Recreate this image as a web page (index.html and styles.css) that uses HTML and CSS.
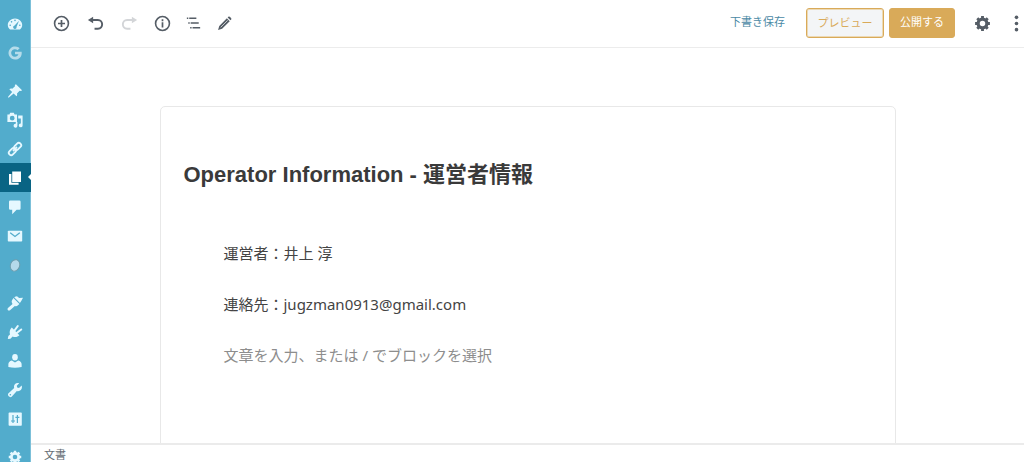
FILE: index.html
```html
<!DOCTYPE html>
<html lang="ja">
<head>
<meta charset="utf-8">
<meta name="viewport" content="width=device-width, initial-scale=1">
<title>Operator Information - 運営者情報</title>
<link rel="stylesheet" href="styles.css">
</head>
<body>
<div class="app">
  <nav class="side" aria-label="管理メニュー">
    <a class="item" href="#" aria-label="ダッシュボード"><svg viewBox="0 0 20 20"><path fill-rule="evenodd" d="M3.800 17h12.400c1.800-1.500 2.800-3.400 2.800-5.700C19 6.700 15 3 10 3s-9 3.700-9 8.300C1 13.600 2 15.500 3.800 17zM10 4.500a1 1 0 1 1 0 2 1 1 0 0 1 0-2zM5.700 6.300a1 1 0 1 1 0 2 1 1 0 0 1 0-2zM15 6l-3 7.500a2.200 2.200 0 1 1-2.500-1.700zM4 10.500a1 1 0 1 1 0 2 1 1 0 0 1 0-2zM16 10.500a1 1 0 1 1 0 2 1 1 0 0 1 0-2z"/></svg></a>
    <a class="item faded" href="#" aria-label="Google"><svg viewBox="0 0 20 20"><path d="M10 8.300h8.300c.8 6-2.800 9.900-8.300 9.900A8.200 8.200 0 1 1 15.800 4.100l-2.600 2.500A4.700 4.700 0 1 0 10 14.700c2.200 0 3.700-1.100 4.300-3H10z"/></svg></a>
    <span class="gap"></span>
    <a class="item" href="#" aria-label="投稿"><svg viewBox="0 0 20 20"><path d="M11.200 1.500l7.600 7.600-1.300 1-1.700-.3-3.300 3.300c.4 1.600.2 2.800-.6 3.600l-3.600-3.600-6.300 5.200-.8-.8 5.200-6.300L2.900 7.700c1-.8 2.300-.9 3.700-.5L10 4l-.2-1.500z"/></svg></a>
    <a class="item" href="#" aria-label="メディア"><svg viewBox="0 0 20 20"><path fill-rule="evenodd" d="M.500 3h2.500l1-2h4.500l1 2h3v9.500H.5zM6.500 4.700a3 3 0 1 0 0 6 3 3 0 0 0 0-6z"/><path d="M14 4.500h5.500v12.300a2.400 2.400 0 1 1-2.200-2.400V8H14zM11 12.500h2v4.700a2.400 2.400 0 1 1-2-2.400z"/></svg></a>
    <a class="item" href="#" aria-label="リンク"><svg viewBox="0 0 20 20"><g fill="none" stroke="currentColor" stroke-width="2.300"><rect x="-5" y="-3" width="10" height="6" rx="3" transform="translate(13.300 6.700) rotate(-45)"/><rect x="-5" y="-3" width="10" height="6" rx="3" transform="translate(6.700 13.300) rotate(-45)"/><path d="M7.500 12.500l5-5"/></g></svg></a>
    <a class="item active" href="#" aria-label="固定ページ" aria-current="page"><svg viewBox="0 0 20 20"><path d="M6.500 2h11v13h-11zM2.500 5h3v11h9v2.500h-12z"/></svg></a>
    <a class="item" href="#" aria-label="コメント"><svg viewBox="0 0 20 20"><path d="M4 2h11.500q1.500 0 1.500 1.500v8.500q0 1.500-1.500 1.500H12l-5.500 5.500v-5.500H4q-1.500 0-1.500-1.500V3.500Q2.500 2 4 2z"/></svg></a>
    <a class="item" href="#" aria-label="お問い合わせ"><svg viewBox="0 0 20 20"><rect x="1" y="3.500" width="18" height="13.500" rx="1"/><path d="M4 6l6 4.700L16 6" fill="none" stroke="#52accc" stroke-width="1.600"/></svg></a>
    <a class="item" href="#" aria-label="プラグイン設定"><svg viewBox="0 0 20 20"><ellipse cx="10" cy="10.500" rx="5.800" ry="7.300" transform="rotate(20 10 10.500)" fill="#b5d9ea" stroke="#6e9cab" stroke-width="1.200"/></svg></a>
    <span class="gap"></span>
    <a class="item" href="#" aria-label="外観"><svg viewBox="0 0 20 20"><path d="M8 3.800l7.500 7.500-2.500 2.200c-1 .8-2 .5-3.200.1l-6 5.400c-1.800 1.500-4.200-.7-2.600-2.600l5.700-5.200C5.800 9.500 5.500 8 6.300 6.500z"/><path d="M9 2.900L11.500 1.500l2 .8 1.500 1.500 5-.3-1.800 3.500-2 3z"/></svg></a>
    <a class="item" href="#" aria-label="プラグイン"><svg viewBox="0 0 20 20"><path d="M6 4.500l9.500 9.500c-2.200 2.300-5.500 2.800-8.500 1.500L4.300 18.500 1 18.700l.7-3.700 2-2C2.800 10 3.500 6.800 6 4.500z"/><path d="M9.500 8l4-5.500M12.500 11l5.300-4.200" stroke="currentColor" stroke-width="2.500" stroke-linecap="round"/></svg></a>
    <a class="item" href="#" aria-label="ユーザー"><svg viewBox="0 0 20 20"><ellipse cx="10" cy="5.300" rx="3.500" ry="4"/><path d="M6 9.500l4 2.300 4-2.300c2.800.7 4.300 2.500 4.300 5V17.500q-8.300 2-16.600 0v-3c0-2.500 1.500-4.300 4.300-5z"/></svg></a>
    <a class="item" href="#" aria-label="ツール"><svg viewBox="0 0 20 20"><path d="M18.300 4.500l-3.300 3-2.300-.5-.5-2.300 3-3.200c-4-1.300-7.500 1.800-6.200 6L1.600 14.300c-1.500 2.600 1.700 5.800 4.200 4.200l6.500-7.300c4.300 1.200 7.500-2.700 6-6.700z"/><circle cx="4.200" cy="15.900" r="1" fill="#52accc"/></svg></a>
    <a class="item" href="#" aria-label="設定"><svg viewBox="0 0 20 20"><rect x="2" y="2" width="16.500" height="16.500" rx="1"/><path d="M7.500 5v10M13 5v10M5 12.500h5M10.500 8h5" stroke="#52accc" stroke-width="1.500"/></svg></a>
    <span class="gap"></span>
    <a class="item" href="#" aria-label="オプション"><svg viewBox="0 0 20 20"><use href="#gear"/></svg></a>
  </nav>

  <div class="editor">
    <header class="toolbar">
      <div class="tools">
        <button class="tool" type="button" aria-label="ブロックの追加"><svg viewBox="0 0 20 20"><circle cx="10" cy="10" r="7.300" fill="none" stroke="currentColor" stroke-width="1.700"/><path d="M10 6.300v7.400M6.300 10h7.400" stroke="currentColor" stroke-width="1.800"/></svg></button>
        <button class="tool" type="button" aria-label="元に戻す"><svg viewBox="0 0 20 20"><path d="M7.500 2.800v7L2 6.300z"/><path d="M6 6.300h6.500c6 0 6 9.200 0 9.200H9" fill="none" stroke="currentColor" stroke-width="2"/></svg></button>
        <button class="tool" type="button" aria-label="やり直す" disabled><svg viewBox="0 0 20 20"><path d="M12.500 2.800v7L18 6.300z"/><path d="M14 6.300H7.500c-6 0-6 9.200 0 9.200H11" fill="none" stroke="currentColor" stroke-width="2"/></svg></button>
      </div>
      <div class="tools details">
        <button class="tool" type="button" aria-label="コンテンツ構造"><svg viewBox="0 0 20 20"><circle cx="10" cy="10" r="7.300" fill="none" stroke="currentColor" stroke-width="1.700"/><path d="M9.100 5.500h1.800v2H9.100zM9.100 8.700h1.800v5.500H9.100z"/></svg></button>
        <button class="tool" type="button" aria-label="ブロックナビゲーション"><svg viewBox="0 0 20 20"><path d="M3 4.500h1.500M5.500 4.500h7.500M4.500 9.500H6M7 9.500h8.500M6.500 14.500H8M9 14.500h8" fill="none" stroke="currentColor" stroke-width="1.600"/></svg></button>
        <button class="tool" type="button" aria-label="編集"><svg viewBox="0 0 20 20"><path d="M12.500 4.500l3 3-8 8-4.300 1.300 1.300-4.300zM13.300 3.700l.8-.7c.6-.5 1.200-.4 1.800.2l.9.9c.6.6.7 1.200.2 1.800l-.7.8z"/><path d="M6 14l7.300-7.300" stroke="#fff" stroke-width=".7"/></svg></button>
      </div>
      <div class="actions">
        <button class="save" type="button">下書き保存</button>
        <button class="btn preview" type="button">プレビュー</button>
        <button class="btn publish" type="button">公開する</button>
        <button class="tool settings" type="button" aria-label="設定"><svg viewBox="0 0 20 20"><g id="gear"><circle cx="10" cy="10" r="4.600" fill="none" stroke="currentColor" stroke-width="3.400"/><path d="M10 2.200v3M10 14.800v3M2.200 10h3M14.800 10h3M4.500 4.500l2 2M13.500 13.500l2 2M4.500 15.500l2-2M13.500 6.500l2-2" stroke="currentColor" stroke-width="3"/></g></svg></button>
        <button class="tool more" type="button" aria-label="その他"><svg viewBox="0 0 20 20"><circle cx="10" cy="3.500" r="1.900"/><circle cx="10" cy="10" r="1.900"/><circle cx="10" cy="16.500" r="1.900"/></svg></button>
      </div>
    </header>
    <main class="canvas">
      <article class="sheet">
        <h1 class="title">Operator Information - 運営者情報</h1>
        <div class="blocks">
          <p class="block">運営者：井上 淳</p>
          <p class="block">連絡先：jugzman0913@gmail.com</p>
          <p class="block placeholder">文章を入力、または / でブロックを選択</p>
        </div>
      </article>
    </main>
    <footer class="crumbs">文書</footer>
  </div>
</div>
</body>
</html>
```
FILE: styles.css
```css
* {
  box-sizing: border-box;
}

body {
  margin: 0;
  color: #444;
  background: #fff;
  font-family: "Noto Sans", "Noto Sans CJK JP", sans-serif;
  font-size: 15px;
}

button {
  padding: 0;
  border: 0;
  background: none;
  font: inherit;
  white-space: nowrap;
}

svg {
  display: block;
  flex: none;
  width: 100%;
  fill: currentColor;
}

.app {
  display: flex;
  height: 100vh;
  overflow: hidden;
}

.side {
  display: flex;
  flex: none;
  flex-direction: column;
  width: 31px;
  padding-top: 9px;
  border-right: 1px solid #7cc0d9;
  background: #52accc;
}

.item {
  position: relative;
  display: flex;
  flex: none;
  align-items: center;
  justify-content: center;
  height: 29px;
  color: #e5f8ff;
}

.item svg {
  width: 16px;
}

.faded {
  color: #b5dcea;
}

.active {
  margin-right: -1px;
  padding-right: 1px;
  background: #096484;
  color: #fff;
}

.active::after {
  position: absolute;
  top: 11px;
  right: 0;
  border: 3px solid transparent;
  border-left: 0;
  border-right-color: #fff;
  content: "";
}

.gap {
  flex: none;
  height: 9px;
}

.editor {
  display: flex;
  flex: 1;
  flex-direction: column;
  min-width: 0;
}

.toolbar {
  display: flex;
  flex: none;
  align-items: center;
  height: 48px;
  padding: 0 0 1px 21px;
  border-bottom: 1px solid #ececec;
}

.tools,
.actions {
  display: flex;
  align-items: center;
}

.tools {
  gap: 15px;
}

.details {
  gap: 12px;
  margin-left: 14px;
}

.actions {
  margin-left: auto;
}

.tool {
  flex: none;
  width: 19px;
  color: #555d66;
}

.tool:disabled {
  color: #d3d5d8;
}

.save {
  margin-right: 21px;
  padding-bottom: 4px;
  color: #4b89a5;
  font-size: 11px;
}

.btn {
  height: 30px;
  border: 1px solid #d9aa59;
  border-radius: 3px;
  font-size: 11px;
}

.preview {
  width: 78px;
  margin-right: 5px;
  padding-bottom: 2px;
  background: #f3f5f7;
  box-shadow: inset 0 0 0 1px #ecd9b5;
  color: #d9aa59;
}

.publish {
  width: 66px;
  margin-right: 18px;
  padding-bottom: 4px;
  background: #d9aa59;
  color: #fff;
}

.settings {
  margin-right: 15px;
}

.more {
  margin-right: -2px;
}

.canvas {
  flex: 1;
  min-height: 0;
  padding: 58px 24px 0;
  overflow: hidden;
}

.sheet {
  max-width: 736px;
  min-height: 100vh;
  margin: 0 auto;
  padding: 50px 23px;
  border: 1px solid #e8e8e8;
  border-radius: 5px;
}

.title {
  margin: 0;
  color: #3a3a3a;
  font-family: "Liberation Sans", "Noto Sans CJK JP", sans-serif;
  font-size: 22px;
  line-height: 36px;
}

.blocks {
  display: grid;
  gap: 27px;
  padding: 48px 40px 0;
}

.block {
  margin: 0;
  line-height: 24px;
}

.placeholder {
  color: #8d8d8d;
}

.crumbs {
  flex: none;
  height: 19px;
  padding-left: 13px;
  border-top: 2px solid #ebebeb;
  color: #666d75;
  font-size: 11px;
  line-height: 20px;
}
```
